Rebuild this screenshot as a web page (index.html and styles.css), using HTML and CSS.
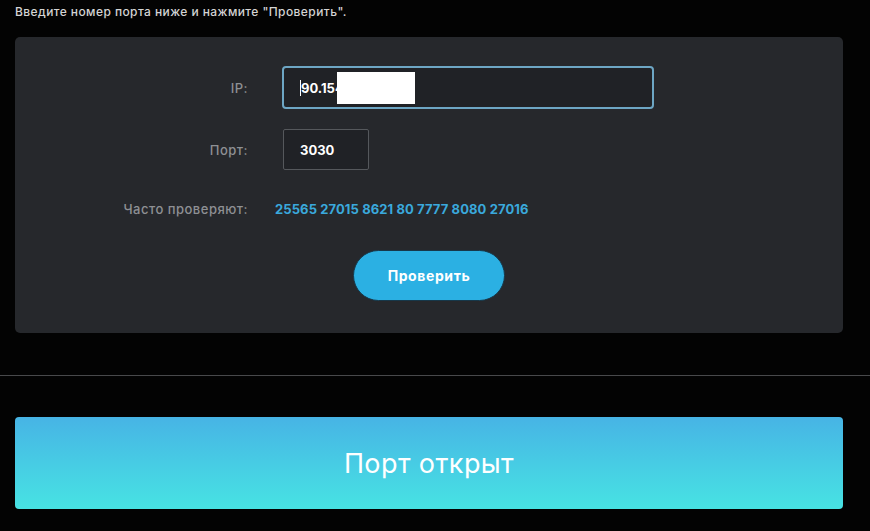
FILE: index.html
```html
<!DOCTYPE html>
<html lang="ru">
<head>
<meta charset="utf-8">
<title>Проверка порта</title>
<link rel="stylesheet" href="styles.css">
</head>
<body>
<p class="intro">Введите номер порта ниже и нажмите "Проверить".</p>
<section class="card">
  <div class="row row-ip">
    <label class="label">IP:</label>
    <div class="input input-ip"><span class="caret"></span>90.154<span class="mask"></span></div>
  </div>
  <div class="row row-port">
    <label class="label">Порт:</label>
    <div class="input input-port">3030</div>
  </div>
  <div class="row row-freq">
    <span class="label">Часто проверяют:</span>
    <span class="ports">25565 27015 8621 80 7777 8080 27016</span>
  </div>
  <div class="actions">
    <button class="btn">Проверить</button>
  </div>
</section>
<hr class="divider">
<div class="result">Порт открыт</div>
</body>
</html>
```
FILE: styles.css
```css
html, body {
  margin: 0;
  padding: 0;
  background: #030303;
}
body {
  font-family: Inter, "Noto Sans", sans-serif;
  color: #e6e6e6;
  height: 531px;
  overflow: hidden;
}
.intro {
  margin: 0;
  padding: 3px 0 0 15px;
  font-size: 12px;
  font-weight: 500;
  line-height: 17px;
  letter-spacing: 0.42px;
  color: #d4d4d4;
}
.card {
  margin: 17px 27px 0 15px;
  height: 296px;
  box-sizing: border-box;
  background: #26282c;
  border-radius: 5px;
  padding-top: 29px;
}
.row {
  display: grid;
  grid-template-columns: 233px auto;
  column-gap: 34px;
  align-items: center;
}
.label {
  text-align: right;
  font-size: 13px;
  letter-spacing: 0.5px;
  color: #8e9094;
  font-weight: 500;
}
.input {
  box-sizing: border-box;
  background: #202226;
  color: #ffffff;
  font-weight: 700;
  font-size: 13px;
  display: flex;
  align-items: center;
}
.input-ip {
  width: 372px;
  height: 43px;
  border: 2px solid #6da6c4;
  border-radius: 4px;
  padding-left: 16px;
  position: relative;
}
.caret {
  display: inline-block;
  width: 1px;
  height: 16px;
  background: #ffffff;
}
.mask {
  position: absolute;
  left: 53px;
  top: 4px;
  width: 78px;
  height: 32px;
  background: #ffffff;
}
.row-port {
  margin-top: 20px;
}
.input-port {
  width: 86px;
  height: 41px;
  border: 1px solid #55585c;
  border-radius: 2px;
  padding-left: 16px;
  margin-left: 1px;
}
.row-freq {
  margin-top: 31px;
  column-gap: 27px;
}
.ports {
  color: #3aa9dc;
  font-weight: 700;
  font-size: 13px;
  letter-spacing: 0.1px;
}
.actions {
  display: flex;
  justify-content: center;
  margin-top: 33px;
}
.btn {
  width: 152px;
  height: 51px;
  border-radius: 26px;
  border: 1px solid #17384a;
  background: #2bb0e3;
  color: #ffffff;
  font-family: Inter, "Noto Sans", sans-serif;
  font-weight: 700;
  font-size: 14px;
  letter-spacing: 0.6px;
}
.divider {
  margin: 42px 0 0 0;
  border: 0;
  height: 1px;
  background: #48494b;
}
.result {
  margin: 41px 27px 0 15px;
  height: 92px;
  border-radius: 4px;
  background: linear-gradient(180deg, #47b4e5 0%, #47e3e3 100%);
  color: #ffffff;
  font-size: 27px;
  display: flex;
  align-items: center;
  justify-content: center;
  letter-spacing: 0.4px;
}
```
